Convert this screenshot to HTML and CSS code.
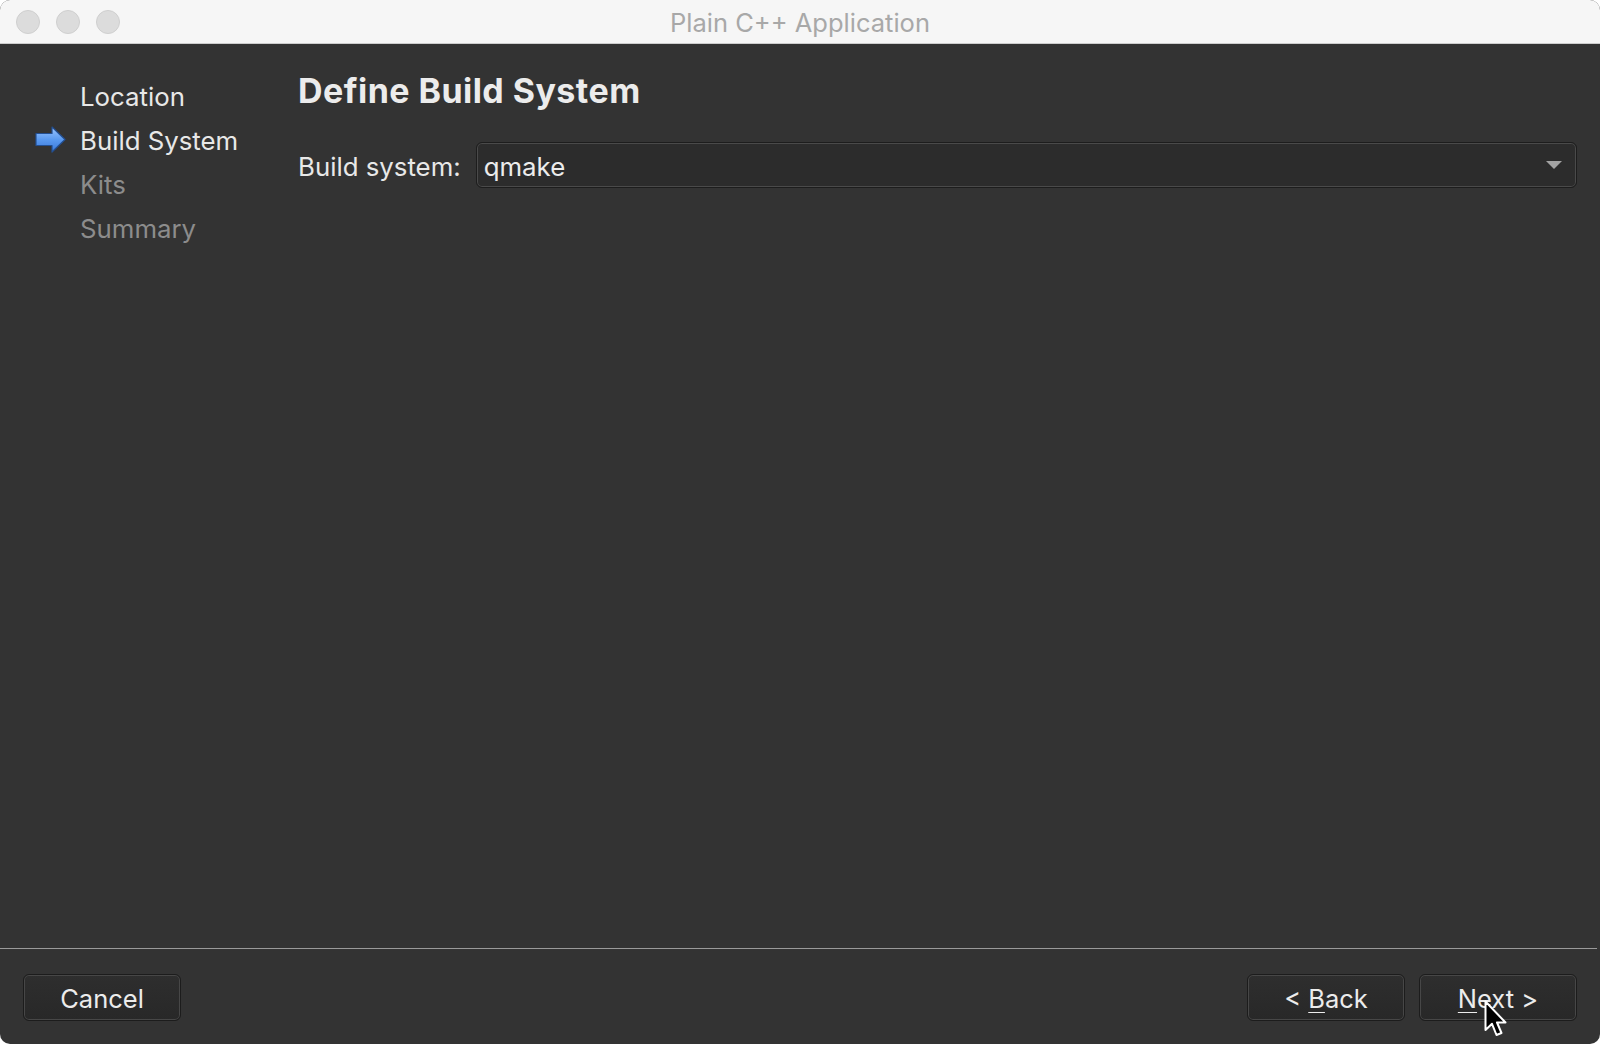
FILE: index.html
```html
<!DOCTYPE html>
<html>
<head>
<meta charset="utf-8">
<link rel="stylesheet" href="styles.css">
</head>
<body>
<div class="window">
  <div class="titlebar">
    <div class="lights">
      <span class="light"></span>
      <span class="light"></span>
      <span class="light"></span>
    </div>
    <div class="title">Plain C++ Application</div>
    <div></div>
  </div>
  <div class="content">
    <ul class="steps">
      <li class="step done"><span class="marker"></span>Location</li>
      <li class="step current"><span class="marker"><svg width="31" height="27" viewBox="0 0 31 27"><defs><linearGradient id="ag" x1="0" y1="0" x2="0" y2="1"><stop offset="0" stop-color="#9cc6ff"/><stop offset="0.5" stop-color="#5a9af0"/><stop offset="1" stop-color="#3a78d8"/></linearGradient></defs><path d="M1 7.5 H17 V1 L30 13.5 L17 26 V19.5 H1 Z" fill="url(#ag)" stroke="#234f92" stroke-width="1.2" stroke-linejoin="round"/></svg></span>Build System</li>
      <li class="step todo"><span class="marker"></span>Kits</li>
      <li class="step todo"><span class="marker"></span>Summary</li>
    </ul>
    <div class="page">
      <h1 class="heading">Define Build System</h1>
      <div class="form-row">
        <label class="label">Build system:</label>
        <div class="combo">
          <span class="combo-value">qmake</span>
          <svg class="combo-arrow" width="16" height="8" viewBox="0 0 16 8"><path d="M0 0 H16 L8 8 Z" fill="#a3a3a3"/></svg>
        </div>
      </div>
    </div>
  </div>
  <div class="separator"></div>
  <div class="footer">
    <button class="btn">Cancel</button>
    <div class="nav">
      <button class="btn">&lt; <u>B</u>ack</button>
      <button class="btn">
        <u>N</u>ext &gt;
        <svg class="cursor" width="24" height="38" viewBox="0 0 24 38"><path d="M1.5 1.5 V30 L8 23.8 L12.5 35 L17.5 33 L13 22.5 H21.5 Z" fill="#000" stroke="#fff" stroke-width="2" stroke-linejoin="round"/></svg>
      </button>
    </div>
  </div>
</div>
</body>
</html>
```
FILE: styles.css
```css
html, body {
  margin: 0;
  padding: 0;
  background: #ffffff;
}
body {
  font-family: Inter, "Liberation Sans", Arial, sans-serif;
}
.window {
  width: 1600px;
  height: 1044px;
  background: #333333;
  border-radius: 10px;
  overflow: hidden;
  display: flex;
  flex-direction: column;
}
.titlebar {
  height: 43px;
  flex: none;
  background: #f6f6f6;
  border-bottom: 1px solid #cdcdcd;
  display: grid;
  grid-template-columns: 1fr auto 1fr;
  align-items: center;
}
.lights {
  display: flex;
  gap: 16px;
  padding-left: 16px;
  padding-top: 1px;
}
.light {
  width: 22px;
  height: 22px;
  border-radius: 50%;
  background: #dcdcdc;
  border: 1px solid #cfcfcf;
}
.title {
  font-size: 25.5px;
  color: #a8a8a8;
  padding-top: 2px;
}
.content {
  flex: 1;
  display: flex;
  min-height: 0;
}
.steps {
  list-style: none;
  margin: 0;
  padding: 30px 0 0 0;
  width: 298px;
  flex: none;
}
.step {
  display: flex;
  align-items: center;
  height: 44px;
  font-size: 25.8px;
  color: #e8e8e8;
}
.step.todo {
  color: #8c8c8c;
}
.marker {
  width: 45px;
  margin-left: 35px;
  display: flex;
  align-items: center;
  flex: none;
}
.marker svg {
  display: block;
  margin-top: -1px;
}
.page {
  flex: 1;
  padding: 26px 23px 0 0;
}
.heading {
  margin: 0;
  font-size: 34px;
  line-height: 41px;
  letter-spacing: 0.45px;
  font-weight: 700;
  color: #ececec;
}
.form-row {
  display: flex;
  align-items: center;
  margin-top: 31px;
  gap: 15px;
}
.label {
  font-size: 25.8px;
  color: #e8e8e8;
  padding-top: 3px;
}
.combo {
  flex: 1;
  box-sizing: border-box;
  height: 46px;
  border: 1px solid #1d1d1d;
  border-radius: 6px;
  box-shadow: inset 0 0 0 1px #4a4a4a;
  background: #2c2c2c;
  display: flex;
  align-items: center;
  justify-content: space-between;
  padding: 2px 14px 0 7px;
}
.combo-value {
  font-size: 25.8px;
  color: #ececec;
}
.combo-arrow {
  display: block;
  margin-top: -2px;
}
.separator {
  flex: none;
  height: 1px;
  background: #9a9a9a;
  margin-right: 3px;
}
.footer {
  flex: none;
  display: flex;
  justify-content: space-between;
  padding: 25px 23px 23px 23px;
}
.nav {
  display: flex;
  gap: 14px;
}
.btn {
  position: relative;
  width: 158px;
  height: 47px;
  box-sizing: border-box;
  border: 1px solid #1c1c1c;
  border-radius: 6px;
  box-shadow: inset 0 0 0 1px #474747;
  background: linear-gradient(#2e2e2e, #282828);
  color: #ececec;
  font-family: Inter, "Liberation Sans", Arial, sans-serif;
  font-size: 25.5px;
  padding: 2px 0 0 0;
  margin: 0;
}
.btn u {
  text-decoration-thickness: 1px;
  text-underline-offset: 4px;
}
.cursor {
  position: absolute;
  left: 64px;
  top: 25px;
}
```
